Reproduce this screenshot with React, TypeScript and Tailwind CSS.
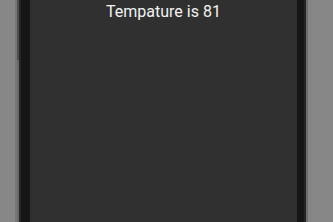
export default function App() {
  return (
    <div className="w-[333px] h-[222px] bg-[#878787] flex overflow-hidden" style={{ fontFamily: "Roboto, 'Noto Sans', sans-serif" }}>
      <div className="w-[15px] shrink-0" />
      <div className="w-[2px] shrink-0 bg-[#767676]" />
      <div className="w-[2px] shrink-0 flex flex-col">
        <div className="h-[60px] bg-[#4e4e4e]" />
        <div className="flex-1 bg-[#6a6a6a]" />
      </div>
      <div className="w-[287px] shrink-0 h-full bg-[#262626] pl-[2px] pr-[2px]">
        <div className="h-full bg-[#161616] pl-[9px] pr-[7px] flex">
          <div className="flex-1 bg-[#303030] flex flex-col items-center">
            <div className="text-[16px] leading-[22px] text-[#f2f2f2] mt-[1px]">Tempature is 81</div>
          </div>
        </div>
      </div>
      <div className="w-[2px] shrink-0 bg-[#6e6e6e]" />
    </div>
  );
}
